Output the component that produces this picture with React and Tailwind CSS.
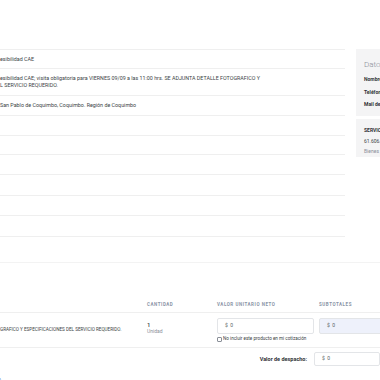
const ROWS = [
  { h: "h-[19px]", lines: ["esibilidad CAE"] },
  {
    h: "h-[27px]",
    lines: [
      "esibilidad CAE; visita obligatoria para VIERNES 09/09 a las 11:00 hrs. SE ADJUNTA DETALLE FOTOGRAFICO Y",
      "L SERVICIO REQUERIDO.",
    ],
  },
  { h: "h-[20px]", lines: ["San Pablo de Coquimbo, Coquimbo. Región de Coquimbo"] },
  { h: "h-[20px]", lines: [] },
  { h: "h-[19px]", lines: [] },
  { h: "h-[20px]", lines: [] },
  { h: "h-[21px]", lines: [] },
  { h: "h-[20px]", lines: [] },
  { h: "h-[21px]", lines: [] },
];

export default function App() {
  return (
    <div
      className="w-[380px] h-[380px] overflow-hidden bg-white text-[#3b3f45]"
      style={{ fontFamily: "Roboto, 'Liberation Sans', sans-serif" }}
    >
      <div className="h-[49px]" />

      {/* detalle + sidebar */}
      <div className="flex gap-[11px]">
        <div className="w-[345px] shrink-0 border-t border-[#efefef]">
          {ROWS.map((r, i) => (
            <div
              key={i}
              className={`${r.h} border-b border-[#efefef] flex flex-col justify-center text-[5.35px] leading-[7px]`}
            >
              {r.lines.map((l, j) => (
                <p key={j} className="whitespace-nowrap">
                  {l}
                </p>
              ))}
            </div>
          ))}
        </div>

        <div className="w-[60px] shrink-0 flex flex-col gap-[3px]">
          <div className="h-[67px] bg-[#f4f4f5] pl-[8px] pt-[10px]">
            <p className="text-[8px] text-[#8a8f98] font-light whitespace-nowrap">Datos del comprador</p>
            <div className="mt-[5px] flex flex-col gap-[5px] text-[5px] font-bold text-[#2f3237] whitespace-nowrap">
              <p>Nombre:</p>
              <p>Teléfono:</p>
              <p>Mail de contacto:</p>
            </div>
          </div>
          <div className="h-[38px] bg-[#f4f4f5] pl-[8px] pt-[8px] text-[5px] whitespace-nowrap">
            <p className="font-bold text-[#2f3237]">SERVICIO DE SALUD</p>
            <p className="mt-[3px] text-[#3b3f45]">61.606.000-7</p>
            <p className="mt-[3px] text-[#8a8f98]">Bienes y servicios</p>
          </div>
        </div>
      </div>

      <div className="h-[25px]" />
      <div className="border-t border-[#f3f3f3]" />

      {/* tabla de productos */}
      <div className="mt-[39px] flex items-end h-[11px] border-b border-[#efefef] text-[4.5px] font-bold tracking-[0.12em] text-[#8a94a6] pb-[3px]">
        <div className="w-[147px] shrink-0" />
        <div className="w-[70px] shrink-0">CANTIDAD</div>
        <div className="w-[102px] shrink-0">VALOR UNITARIO NETO</div>
        <div className="shrink-0">SUBTOTALES</div>
      </div>

      <div className="h-[35px] flex border-b border-[#efefef]">
        <div className="w-[147px] shrink-0 flex items-center text-[4.6px] whitespace-nowrap">
          GRAFICO Y ESPECIFICACIONES DEL SERVICIO REQUERIDO.
        </div>
        <div className="w-[70px] shrink-0 pt-[8px]">
          <p className="text-[6px] leading-[7px] font-medium">1</p>
          <p className="text-[5px] leading-[6px] text-[#8a8f98]">Unidad</p>
        </div>
        <div className="w-[102px] shrink-0 pt-[5px]">
          <div className="w-[97px] h-[16px] border border-[#e3e5e8] rounded-[2px] flex items-center pl-[7px] text-[5px] text-[#5a5f66]">
            $&nbsp;&nbsp;0
          </div>
          <label className="mt-[2px] flex items-center gap-[1px] text-[4.6px] text-[#3b3f45] whitespace-nowrap">
            <span className="inline-block w-[5px] h-[5px] border border-[#8a8f98] rounded-[1px] bg-white" />
            No incluir este producto en mi cotización
          </label>
        </div>
        <div className="pt-[5px]">
          <div className="w-[80px] h-[16px] border border-[#e3e5e8] bg-[#eef1fb] rounded-[2px] flex items-center pl-[7px] text-[5px] text-[#5a5f66]">
            $&nbsp;&nbsp;0
          </div>
        </div>
      </div>

      <div className="mt-[4px] flex items-center h-[14px]">
        <div className="w-[307px] shrink-0 text-right text-[5.5px] font-bold text-[#2f3237]">
          Valor de despacho:
        </div>
        <div className="ml-[7px] w-[80px] h-[14px] border border-[#e3e5e8] rounded-[2px] flex items-center pl-[7px] text-[5px] text-[#5a5f66]">
          $&nbsp;&nbsp;0
        </div>
      </div>

      <div className="mt-[10px] text-[5px] text-[#4a7bd8] -ml-[2px]">o</div>
    </div>
  );
}
